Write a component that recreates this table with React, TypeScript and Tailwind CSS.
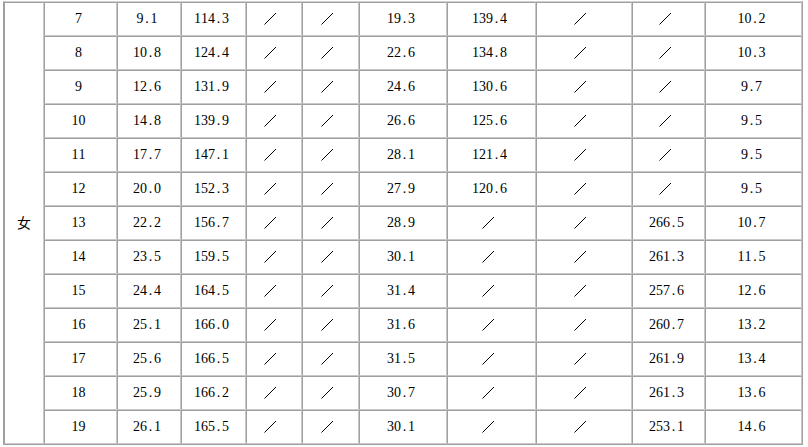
import React from "react";

const rows: string[][] = [
  ["7", "9.1", "114.3", "/", "/", "19.3", "139.4", "/", "/", "10.2"],
  ["8", "10.8", "124.4", "/", "/", "22.6", "134.8", "/", "/", "10.3"],
  ["9", "12.6", "131.9", "/", "/", "24.6", "130.6", "/", "/", "9.7"],
  ["10", "14.8", "139.9", "/", "/", "26.6", "125.6", "/", "/", "9.5"],
  ["11", "17.7", "147.1", "/", "/", "28.1", "121.4", "/", "/", "9.5"],
  ["12", "20.0", "152.3", "/", "/", "27.9", "120.6", "/", "/", "9.5"],
  ["13", "22.2", "156.7", "/", "/", "28.9", "/", "/", "266.5", "10.7"],
  ["14", "23.5", "159.5", "/", "/", "30.1", "/", "/", "261.3", "11.5"],
  ["15", "24.4", "164.5", "/", "/", "31.4", "/", "/", "257.6", "12.6"],
  ["16", "25.1", "166.0", "/", "/", "31.6", "/", "/", "260.7", "13.2"],
  ["17", "25.6", "166.5", "/", "/", "31.5", "/", "/", "261.9", "13.4"],
  ["18", "25.9", "166.2", "/", "/", "30.7", "/", "/", "261.3", "13.6"],
  ["19", "26.1", "165.5", "/", "/", "30.1", "/", "/", "253.1", "14.6"],
];

const widths = ["w-[73px]", "w-[64px]", "w-[65px]", "w-[56px]", "w-[57px]", "w-[88px]", "w-[89px]", "w-[96px]", "w-[73px]", "w-[97px]"];

function Num({ v }: { v: string }) {
  if (v === "/") {
    return (
      <span className="inline-block w-[14px] h-[14px] align-middle relative -left-[2px]">
        <span className="absolute inset-0 overflow-hidden text-transparent select-none">／</span>
        <svg className="absolute inset-0" width="14" height="14" viewBox="0 0 14 14" aria-hidden="true">
          <line x1="1.5" y1="12.5" x2="13" y2="1" stroke="#000" strokeWidth="1" />
        </svg>
      </span>
    );
  }
  return (
    <span className="inline-flex">
      {v.split("").map((c, i) => (
        <span key={i} className="inline-block w-[7px] text-center">
          {c}
        </span>
      ))}
    </span>
  );
}

export default function App() {
  const cell = "border-t border-l border-t-[#a0a0a0] border-l-[#a0a0a0] border-b border-r border-b-[#c8c8c8] border-r-[#c8c8c8] p-0 text-center align-middle";
  return (
    <div className="w-[808px] h-[447px] bg-white pl-[3px] pt-[1px] overflow-hidden">
      <table
        className="border-separate border-spacing-0 border border-t-[#d0d0d0] border-l-[#a0a0a0] border-b-[#a0a0a0] border-r-[#a0a0a0] text-black text-[14px] leading-none"
        style={{ fontFamily: '"Liberation Serif", "Noto Sans CJK SC", serif' }}
      >
        <tbody>
          {rows.map((r, ri) => (
            <tr key={ri} className="h-[34px]">
              {ri === 0 && (
                <td rowSpan={13} className={`${cell} w-[40px]`}>
                  <span style={{ fontFamily: '"Noto Sans CJK SC", sans-serif' }} className="text-[14px]">
                    女
                  </span>
                </td>
              )}
              {r.map((v, ci) => (
                <td key={ci} className={`${cell} ${widths[ci]} pr-[4px]`}>
                  <Num v={v} />
                </td>
              ))}
            </tr>
          ))}
        </tbody>
      </table>
    </div>
  );
}
